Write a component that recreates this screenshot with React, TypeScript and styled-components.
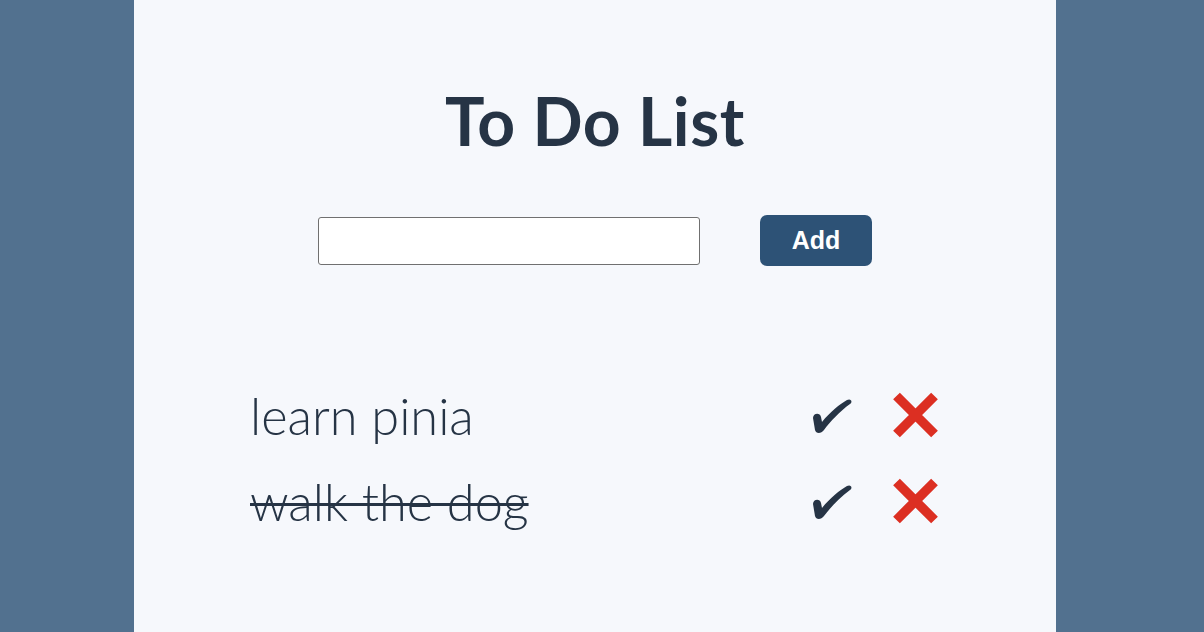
import React, { useState } from "react";
import styled, { createGlobalStyle } from "styled-components";

const Global = createGlobalStyle`
  html, body { margin: 0; padding: 0; height: 100%; }
  body { background: #52718f; font-family: "Lato", "Noto Sans", sans-serif; }
  #root { min-height: 100%; }
`;

const Page = styled.div`
  display: flex;
  justify-content: center;
  min-height: 632px;
  padding-right: 14px;
`;

const Column = styled.main`
  width: 922px;
  background: #f6f8fc;
  display: flex;
  flex-direction: column;
  align-items: center;
  padding-top: 81px;
  box-sizing: border-box;
  color: #263445;
`;

const Title = styled.h1`
  margin: 0;
  font-family: "Lato", sans-serif;
  font-weight: 700;
  font-size: 66px;
  line-height: 80px;
  letter-spacing: 0.6px;
  color: #263445;
`;

const Form = styled.form`
  display: flex;
  align-items: center;
  gap: 60px;
  margin-top: 54px;
`;

const Input = styled.input`
  width: 382px;
  height: 48px;
  box-sizing: border-box;
  border: 1.5px solid #707070;
  border-radius: 3px;
  background: #ffffff;
  font-size: 20px;
  padding: 0 8px;
`;

const AddButton = styled.button`
  width: 112px;
  height: 51px;
  border: none;
  border-radius: 7px;
  background: #2d5276;
  color: #ffffff;
  font-family: "Liberation Sans", Arial, sans-serif;
  font-weight: 700;
  font-size: 25px;
  cursor: pointer;
`;

const List = styled.ul`
  list-style: none;
  margin: 118px 0 0;
  padding: 0;
  width: 690px;
  display: flex;
  flex-direction: column;
  gap: 24px;
`;

const Item = styled.li`
  display: flex;
  align-items: center;
  height: 62px;
`;

const Label = styled.span<{ $done: boolean }>`
  flex: 1;
  font-family: "Lato", sans-serif;
  font-weight: 300;
  font-size: 50.5px;
  color: #263445;
  text-decoration: ${(p) => (p.$done ? "line-through" : "none")};
  text-decoration-thickness: 3px;
`;

const IconButton = styled.button`
  background: none;
  border: none;
  padding: 0;
  display: flex;
  align-items: center;
  cursor: pointer;
`;

const Actions = styled.div`
  display: flex;
  align-items: center;
  gap: 39px;
  margin-right: 0;
`;

const CheckIcon = styled.svg`
  margin-top: 2px;
`;

const Check = () => (
  <CheckIcon width="42" height="36" viewBox="0 0 42 36">
    <path
      d="M3 20 C3 15 10 14 11 19 L12 24 C20 14 30 6 37 2 C41 0 43 4 40 6 C30 13 20 24 14 32 C11 36 6 36 5 32 Z"
      fill="#263445"
    />
  </CheckIcon>
);

const Cross = () => (
  <svg width="49" height="48" viewBox="0 0 48 48">
    <path d="M5 5 L43 43 M43 5 L5 43" stroke="#dc2f22" strokeWidth="9.5" strokeLinecap="butt" />
  </svg>
);

export default function App() {
  const [items] = useState([
    { text: "learn pinia", done: false },
    { text: "walk the dog", done: true },
  ]);
  return (
    <>
      <Global />
      <Page>
        <Column>
          <Title>To Do List</Title>
          <Form onSubmit={(e) => e.preventDefault()}>
            <Input type="text" />
            <AddButton type="submit">Add</AddButton>
          </Form>
          <List>
            {items.map((it) => (
              <Item key={it.text}>
                <Label $done={it.done}>{it.text}</Label>
                <Actions>
                  <IconButton aria-label="toggle">
                    <Check />
                  </IconButton>
                  <IconButton aria-label="delete">
                    <Cross />
                  </IconButton>
                </Actions>
              </Item>
            ))}
          </List>
        </Column>
      </Page>
    </>
  );
}
